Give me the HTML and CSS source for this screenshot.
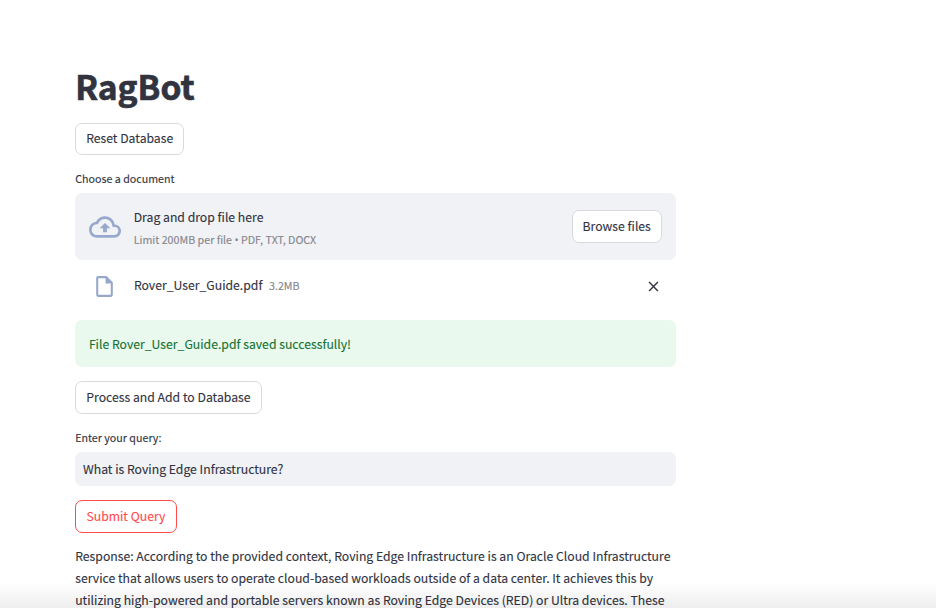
FILE: index.html
```html
<!DOCTYPE html>
<html lang="en">
<head>
<meta charset="utf-8">
<title>RagBot</title>
<link rel="stylesheet" href="styles.css">
</head>
<body>
<main class="page">
  <h1 class="title">RagBot</h1>
  <button class="btn btn-reset">Reset Database</button>
  <div class="label label-upload">Choose a document</div>
  <section class="dropzone">
    <svg class="cloud" viewBox="0 0 24 24" fill="currentColor"><path d="M19.35 10.04A7.49 7.49 0 0 0 12 4C9.11 4 6.6 5.64 5.35 8.04A5.994 5.994 0 0 0 0 14c0 3.31 2.69 6 6 6h13c2.76 0 5-2.24 5-5 0-2.64-2.05-4.78-4.65-4.96zM19 18H6c-2.21 0-4-1.79-4-4 0-2.05 1.53-3.76 3.56-3.97l1.07-.11.5-.95A5.469 5.469 0 0 1 12 6c2.62 0 4.88 1.86 5.39 4.43l.3 1.5 1.53.11A2.98 2.98 0 0 1 22 15c0 1.65-1.35 3-3 3zM8 13h2.55v3h2.9v-3H16l-4-4z"/></svg>
    <div class="drop-text">
      <div class="drop-main">Drag and drop file here</div>
      <div class="small">Limit 200MB per file <span class="dot">•</span> PDF, TXT, DOCX</div>
    </div>
    <button class="btn btn-browse">Browse files</button>
  </section>
  <div class="file">
    <svg class="doc" viewBox="0 0 24 24" fill="currentColor"><path d="M14 2H6c-1.1 0-1.99.9-1.99 2L4 20c0 1.1.89 2 1.99 2H18c1.1 0 2-.9 2-2V8l-6-6zM6 20V4h7v5h5v11H6z"/></svg>
    <span class="file-name">Rover_User_Guide.pdf</span>
    <span class="small file-size">3.2MB</span>
    <svg class="close" viewBox="0 0 12 12" fill="none" stroke="currentColor" stroke-width="1.5"><path d="M1.2 1.2l9.6 9.6M10.8 1.2l-9.6 9.6"/></svg>
  </div>
  <div class="alert">File Rover_User_Guide.pdf saved successfully!</div>
  <button class="btn btn-process">Process and Add to Database</button>
  <div class="label label-query">Enter your query:</div>
  <input class="query" type="text" aria-label="Enter your query:" value="What is Roving Edge Infrastructure?">
  <button class="btn btn-submit">Submit Query</button>
  <p class="response">Response: According to the provided context, Roving Edge Infrastructure is an Oracle Cloud Infrastructure<br>service that allows users to operate cloud-based workloads outside of a data center. It achieves this by<br>utilizing high-powered and portable servers known as Roving Edge Devices (RED) or Ultra devices. These</p>
</main>
<div class="fade"></div>
</body>
</html>
```
FILE: styles.css
```css
* { box-sizing: border-box; }
html, body { height: 100%; }
body {
  margin: 0;
  overflow: hidden;
  background: #fff;
  color: #31333f;
  font: 12.22px/22px "Noto Sans CJK SC", "Source Sans Pro", sans-serif;
  -webkit-text-stroke: .12px currentColor;
}
.page {
  display: flex;
  flex-direction: column;
  align-items: flex-start;
  width: 600.5px;
  margin-left: 75.2px;
  padding-top: 63px;
  white-space: nowrap;
}
.title {
  margin: 0 0 14px;
  font-size: 33.5px;
  line-height: 46px;
  font-weight: 700;
  -webkit-text-stroke: .7px currentColor;
}
.btn {
  height: 33px;
  padding: 0;
  border: 1px solid #d9dade;
  border-radius: 7px;
  background: #fff;
  color: inherit;
  font: inherit;
  line-height: 29px;
}
.btn-reset { width: 109px; height: 32px; padding-bottom: 1px; }
.label { font-size: 10.7px; line-height: 16px; }
.label-upload { margin: 16px 0 6px; }
.dropzone {
  display: flex;
  align-items: center;
  width: 100%;
  height: 67px;
  padding: 0 14px 0 13.5px;
  border-radius: 7px;
  background: #f0f2f6;
}
.cloud { width: 32px; height: 32px; color: #98a8cc; }
.drop-text { margin: 3px 0 0 13px; }
.drop-main { line-height: 23px; }
.small { font-size: 10.7px; line-height: 21px; color: #84858c; }
.dot { font-family: "Open Sans", sans-serif; font-size: 11px; }
.btn-browse { width: 90px; margin-left: auto; }
.file {
  display: flex;
  align-items: center;
  width: 100%;
  height: 53px;
  padding: 0 17px 0 17px;
}
.doc { width: 25px; height: 25px; color: #98a8cc; }
.file-name { margin: 0 6.6px 3px 16.7px; }
.file-size { margin-bottom: 2px; }
.close { width: 11px; height: 11px; margin-left: auto; }
.alert {
  width: 100%;
  height: 47px;
  margin-top: 7.4px;
  padding: 1px 13.7px 0;
  border-radius: 7px;
  background: #e9f9ee;
  color: #177233;
  line-height: 46px;
}
.btn-process { width: 186.5px; margin-top: 14px; }
.label-query { margin: 15.6px 0 6px; }
.query {
  width: 100%;
  height: 34px;
  padding: 0 7.8px;
  border: 0;
  border-radius: 7px;
  background: #f0f2f6;
  color: inherit;
  font: inherit;
}
.btn-submit { width: 101.5px; margin-top: 14px; border-color: #ff4b4b; color: #ff4b4b; }
.response { margin: 13.5px 0 0; line-height: 21.7px; }
.fade {
  position: fixed;
  inset: auto 0 0;
  height: 26px;
  background: linear-gradient(transparent, rgba(0, 0, 0, .065));
}
```
